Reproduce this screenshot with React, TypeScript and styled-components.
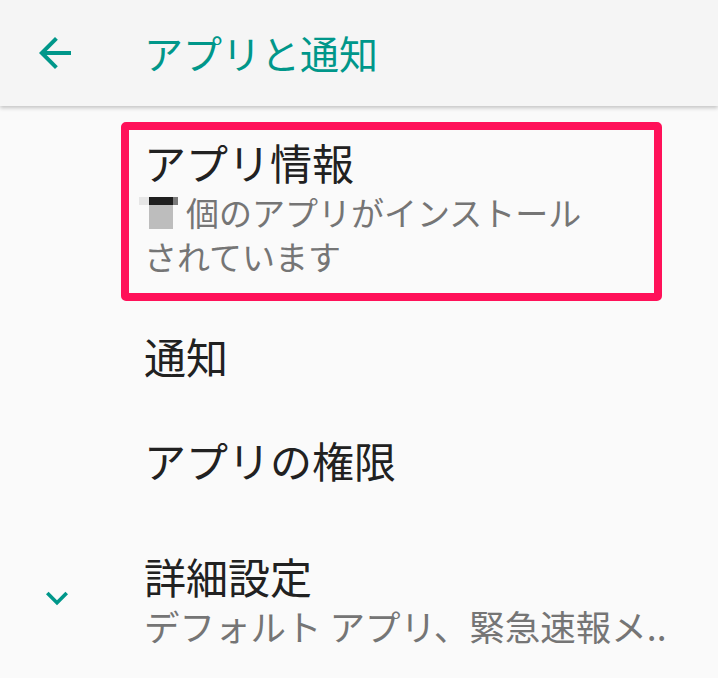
import styled, { createGlobalStyle } from "styled-components";

const GlobalStyle = createGlobalStyle`
  html, body {
    margin: 0;
    padding: 0;
    background: #fafafa;
  }
  body {
    font-family: "Noto Sans CJK JP", "Noto Sans", sans-serif;
  }
`;

const Screen = styled.div`
  width: 718px;
  height: 678px;
  overflow: hidden;
  background: #fafafa;
`;

const Toolbar = styled.header`
  height: 106px;
  display: flex;
  align-items: center;
  background: #f5f5f5;
  box-shadow: 0 2px 4px rgba(0, 0, 0, 0.22);
  position: relative;
`;

const IconSlot = styled.div<{ $left: number }>`
  width: 144px;
  flex: none;
  display: flex;
  align-items: center;
  padding-left: ${(p) => p.$left}px;
  box-sizing: border-box;
  color: #00978a;
`;

const ToolbarTitle = styled.h1`
  margin: 0 0 2px 0;
  font-size: 39px;
  font-weight: 400;
  line-height: 1;
  color: #00978a;
`;

const List = styled.div`
  display: flex;
  flex-direction: column;
`;

const Row = styled.div<{ $pad: string }>`
  display: flex;
  align-items: center;
  padding: ${(p) => p.$pad};
`;

const Texts = styled.div`
  display: flex;
  flex-direction: column;
  min-width: 0;
`;

const Title = styled.div`
  font-size: 42px;
  line-height: 56px;
  color: #212121;
`;

const Summary = styled.div<{ $size: number }>`
  font-size: ${(p) => p.$size}px;
  line-height: 44px;
  color: #757575;
`;

const InstallSummary = styled(Summary)`
  max-width: 460px;
`;

const DetailSummary = styled(Summary)`
  white-space: nowrap;
`;

const Highlight = styled.div`
  margin-left: -23px;
  width: 541px;
  box-sizing: border-box;
  border: 8px solid #ff1159;
  border-radius: 5px;
  padding: 4px 0 15px 15px;
`;

const Redacted = styled.span`
  display: inline-block;
  width: 39px;
  height: 32px;
  margin-left: -5px;
  margin-right: 8px;
  vertical-align: -3px;
  background:
    linear-gradient(
        to right,
        #e6e6e6 0 10px,
        #1f1f1f 10px 34px,
        #7a7a7a 34px 39px
      )
      0 0 / 100% 8px no-repeat,
    linear-gradient(#bdbdbd, #bdbdbd) 10px 8px / 24px 24px no-repeat;
`;

const BackArrow = () => (
  <svg width="48" height="48" viewBox="0 0 24 24" fill="currentColor">
    <path d="M20 11H7.83l5.59-5.59L12 4l-8 8 8 8 1.41-1.41L7.83 13H20v-2z" />
  </svg>
);

const ExpandMore = () => (
  <svg width="44" height="44" viewBox="0 0 24 24" fill="currentColor">
    <path d="M16.59 8.59L12 13.17 7.41 8.59 6 10l6 6 6-6z" />
  </svg>
);

function App() {
  return (
    <Screen>
      <GlobalStyle />
      <Toolbar>
        <IconSlot $left={31}>
          <BackArrow />
        </IconSlot>
        <ToolbarTitle>アプリと通知</ToolbarTitle>
      </Toolbar>

      <List>
        <Row $pad="16px 0 6px 0">
          <IconSlot $left={0} />
          <Highlight>
            <Title>アプリ情報</Title>
            <InstallSummary $size={33}>
              <Redacted />
              個のアプリがインストールされています
            </InstallSummary>
          </Highlight>
        </Row>

        <Row $pad="21px 0 27px 0">
          <IconSlot $left={0} />
          <Title>通知</Title>
        </Row>

        <Row $pad="21px 0 27px 0">
          <IconSlot $left={0} />
          <Title>アプリの権限</Title>
        </Row>

        <Row $pad="33px 0 24px 0">
          <IconSlot $left={35}>
            <ExpandMore />
          </IconSlot>
          <Texts>
            <Title>詳細設定</Title>
            <DetailSummary $size={35.5}>デフォルト アプリ、緊急速報メ..</DetailSummary>
          </Texts>
        </Row>
      </List>
    </Screen>
  );
}

export default App;
